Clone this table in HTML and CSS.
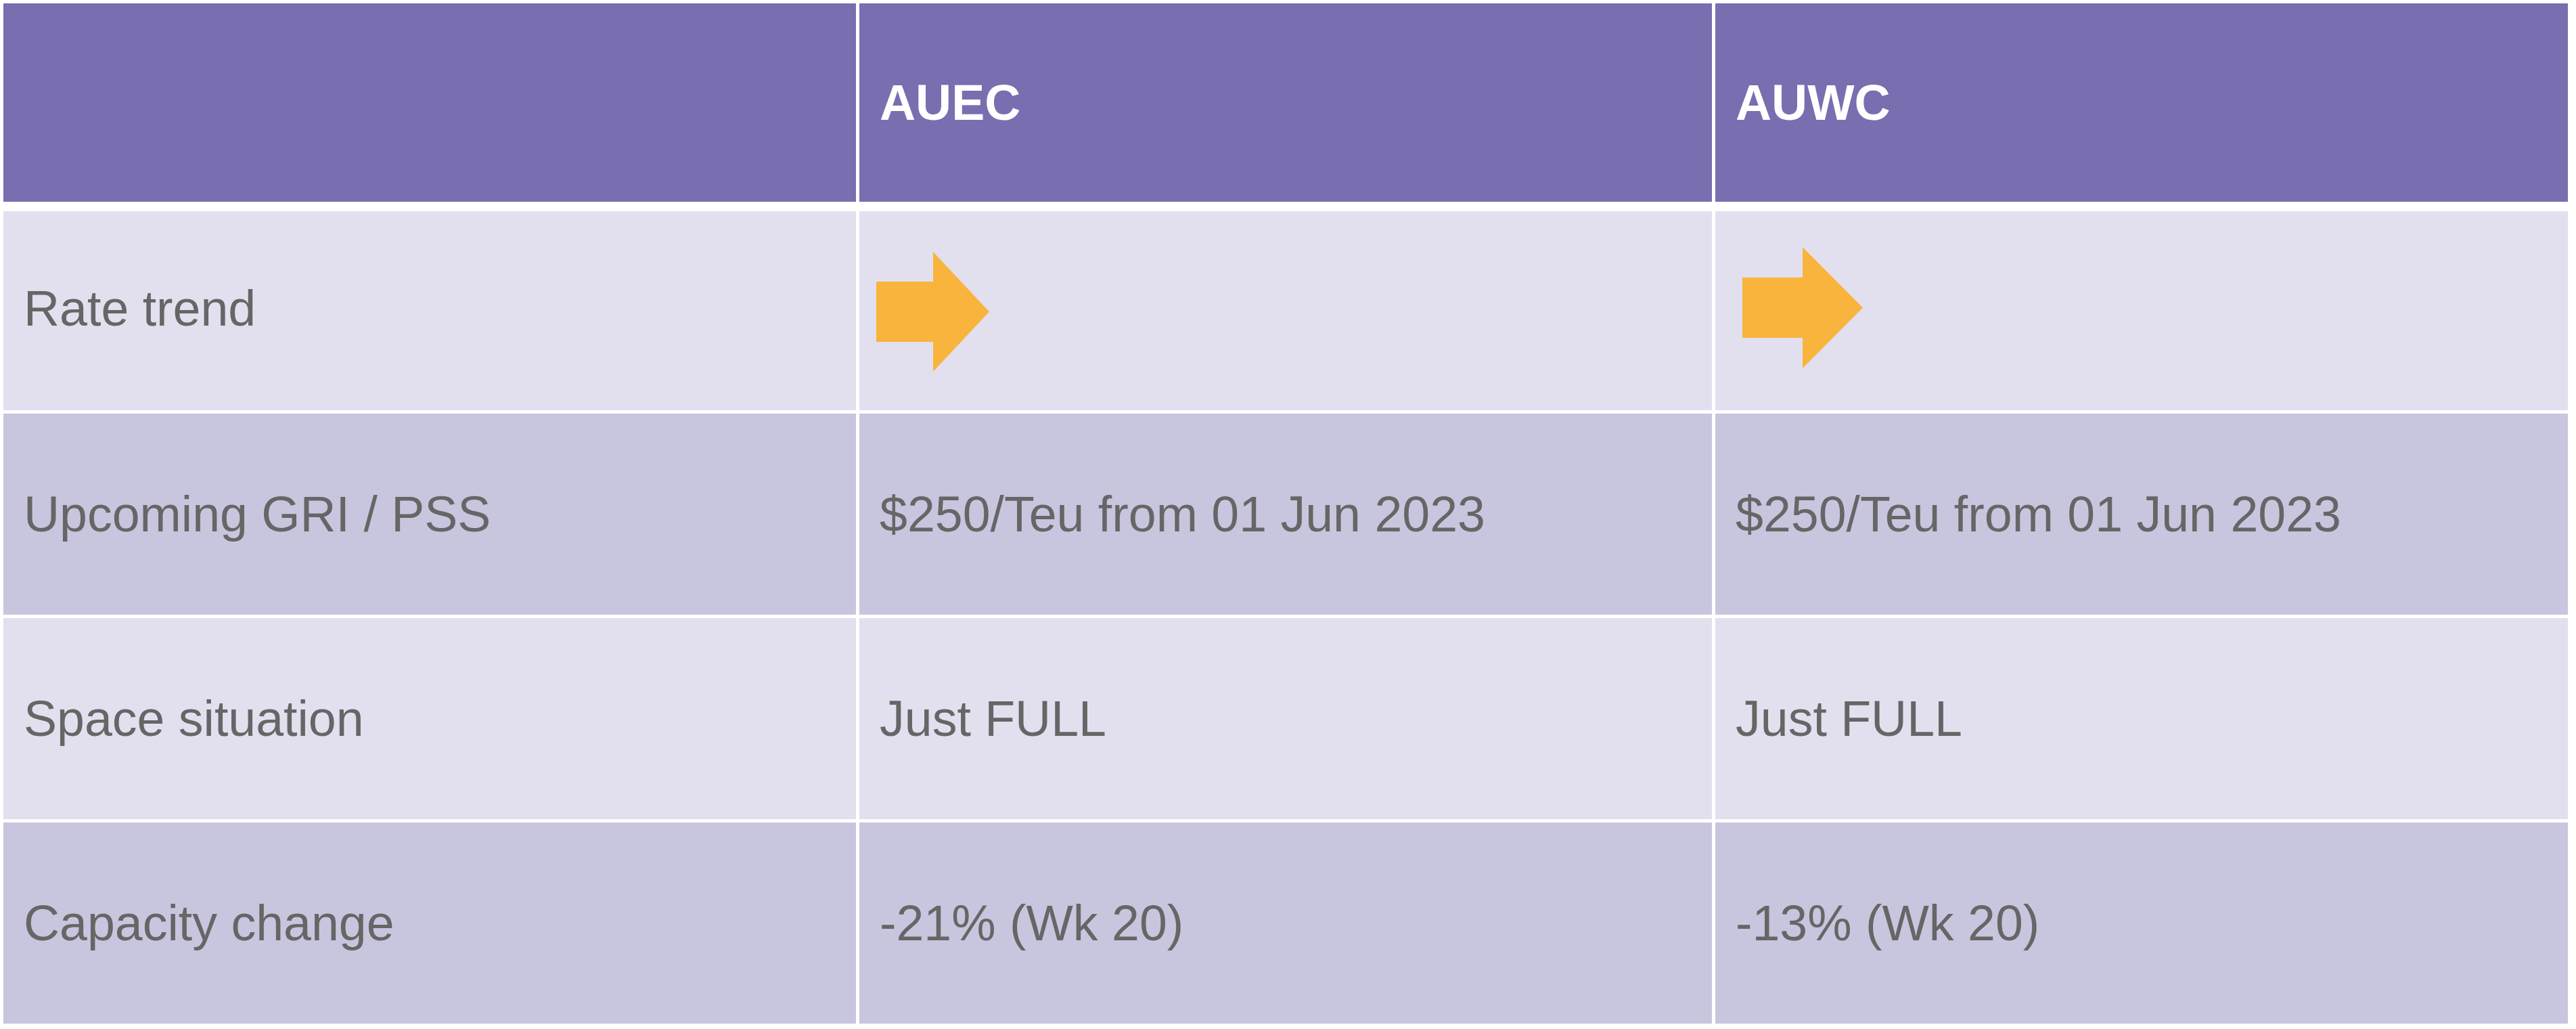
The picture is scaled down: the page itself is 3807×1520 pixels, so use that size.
FILE: index.html
```html
<!DOCTYPE html>
<html lang="en">
<head>
<meta charset="utf-8">
<title>Trade lane overview</title>
<link rel="stylesheet" href="styles.css">
</head>
<body>
<div class="table">
  <div class="row row-head">
    <div class="cell"></div>
    <div class="cell">AUEC</div>
    <div class="cell">AUWC</div>
  </div>
  <div class="row row-light row-first">
    <div class="cell cell-raised">Rate trend</div>
    <div class="cell cell-arrow-a">
      <svg class="arrow arrow-a" width="167" height="177" viewBox="0 0 167 177"><polygon points="0,44 84,44 84,0 167,88.5 84,177 84,133 0,133"/></svg>
    </div>
    <div class="cell cell-arrow-b">
      <svg class="arrow arrow-b" width="178" height="179" viewBox="0 0 178 179"><polygon points="0,45 89,45 89,0 178,89.5 89,179 89,134 0,134"/></svg>
    </div>
  </div>
  <div class="row row-dark">
    <div class="cell">Upcoming GRI / PSS</div>
    <div class="cell">$250/Teu from 01 Jun 2023</div>
    <div class="cell">$250/Teu from 01 Jun 2023</div>
  </div>
  <div class="row row-light">
    <div class="cell">Space situation</div>
    <div class="cell">Just FULL</div>
    <div class="cell">Just FULL</div>
  </div>
  <div class="row row-dark">
    <div class="cell">Capacity change</div>
    <div class="cell">-21% (Wk 20)</div>
    <div class="cell">-13% (Wk 20)</div>
  </div>
</div>
</body>
</html>
```
FILE: styles.css
```css
html, body {
  margin: 0;
  padding: 0;
  background: #ffffff;
}

body {
  padding: 5px;
  font-family: "Liberation Sans", Arial, sans-serif;
}

.table {
  display: flex;
  flex-direction: column;
  gap: 5px;
  width: 3790px;
}

.row {
  display: grid;
  grid-template-columns: 1260px 1260px 1260px;
  column-gap: 5px;
  height: 297px;
}

.cell {
  display: flex;
  align-items: center;
  padding-left: 30px;
  font-size: 73.5px;
  color: #666666;
  white-space: nowrap;
}

.row-head {
  height: 293px;
  margin-bottom: 9px;
}

.row-head .cell {
  background: #796eb0;
  color: #ffffff;
  font-weight: bold;
}

.row-first {
  height: 294px;
}

.row-light .cell {
  background: #e2e0ee;
}

.row-dark .cell {
  background: #c8c5de;
}

.cell-raised {
  padding-bottom: 8px;
}

.cell-arrow-a {
  padding-left: 25px;
}

.cell-arrow-b {
  padding-left: 40px;
}

.arrow {
  display: block;
  fill: #f8b43c;
}

.arrow-a {
  margin-top: 3px;
}

.arrow-b {
  margin-bottom: 9px;
}
```
